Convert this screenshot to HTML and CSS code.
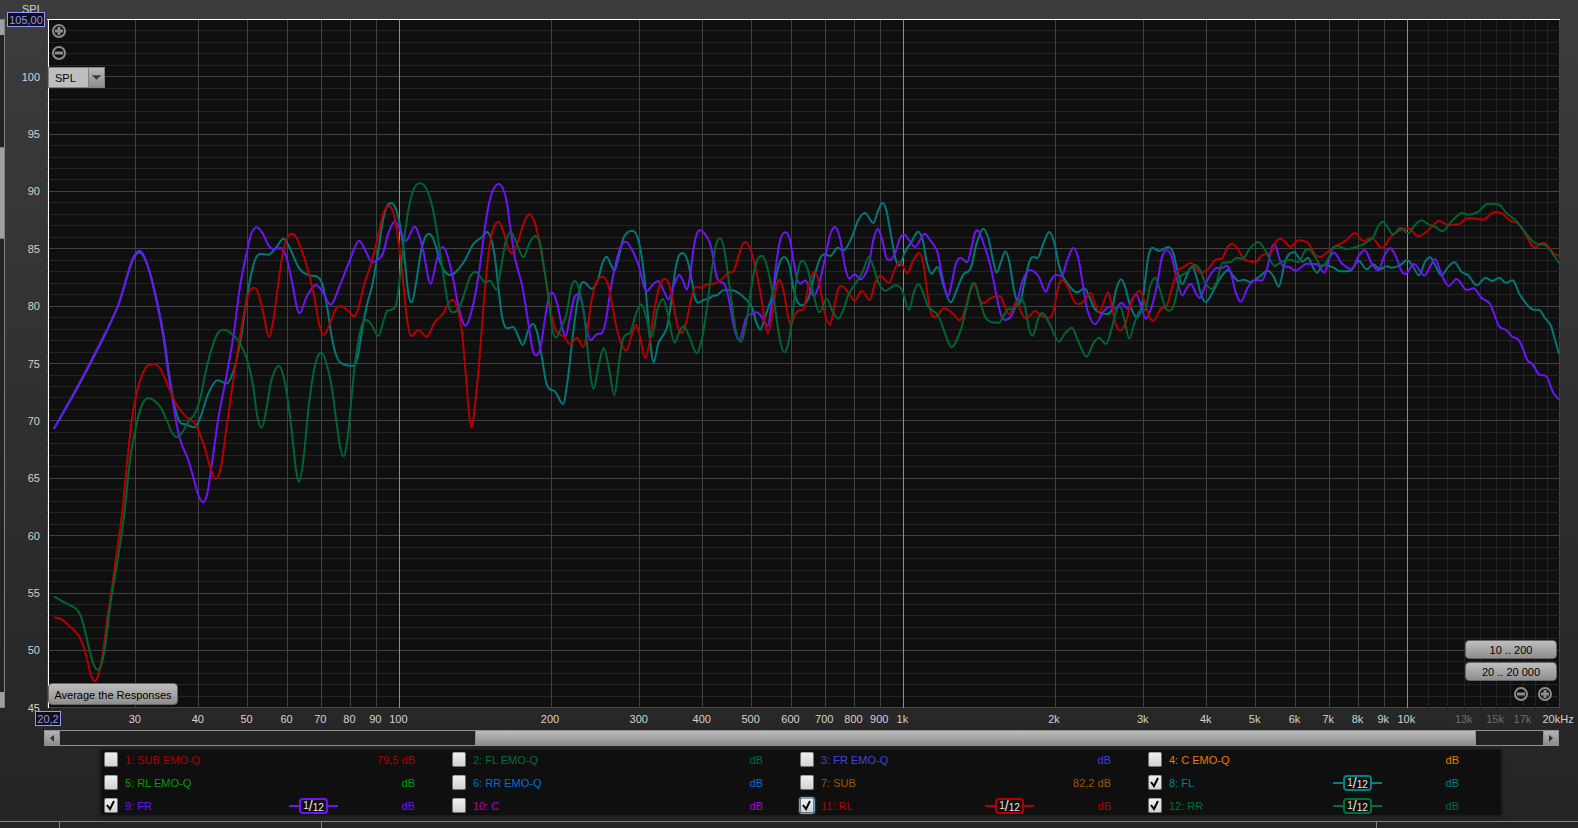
FILE: index.html
```html
<!DOCTYPE html>
<html lang="en">
<head>
<meta charset="utf-8">
<title>SPL overlays</title>
<link rel="stylesheet" href="styles.css">
</head>
<body>
<main class="app">
  <section class="chart">
    <div class="vscroll">
      <button class="step" type="button" aria-label="Scroll up"></button>
      <div class="vtrack"><div class="vthumb"></div></div>
      <button class="step" type="button" aria-label="Scroll down"></button>
    </div>
    <div class="y-axis" id="y-axis">
      <span class="unit">SPL</span>
      <input class="limit limit-top" type="text" value="105,00" aria-label="Top of range">
    </div>
    <div class="plot">
      <svg class="graph" id="graph" viewBox="141 57 4539 2067" preserveAspectRatio="none" role="img" aria-label="Frequency response"></svg>
      <div class="tools tools-top">
        <button class="zoom" type="button" aria-label="Zoom in vertically"><svg viewBox="0 0 16 16"><circle cx="8" cy="8" r="6"/><path d="M4 8h8M8 4v8"/></svg></button>
        <button class="zoom" type="button" aria-label="Zoom out vertically"><svg viewBox="0 0 16 16"><circle cx="8" cy="8" r="6"/><path d="M4 8h8"/></svg></button>
        <div class="picker">
          <select aria-label="Vertical axis"><option>SPL</option></select>
          <svg class="arrow" viewBox="0 0 16 19"><path d="M3 7h10l-5 5z"/></svg>
        </div>
      </div>
      <button class="push average" type="button">Average the Responses</button>
      <div class="tools tools-bottom">
        <button class="push" type="button">10 .. 200</button>
        <button class="push" type="button">20 .. 20 000</button>
        <div class="zoom-pair">
          <button class="zoom" type="button" aria-label="Zoom out horizontally"><svg viewBox="0 0 16 16"><circle cx="8" cy="8" r="6"/><path d="M4 8h8"/></svg></button>
          <button class="zoom" type="button" aria-label="Zoom in horizontally"><svg viewBox="0 0 16 16"><circle cx="8" cy="8" r="6"/><path d="M4 8h8M8 4v8"/></svg></button>
        </div>
      </div>
    </div>
    <div class="x-axis" id="x-axis">
      <input class="limit limit-left" type="text" value="20,2" aria-label="Start of range">
    </div>
    <div class="hscroll">
      <button class="hstep" type="button" aria-label="Scroll left"><svg viewBox="0 0 14 14"><path d="M9 4v7L5 7z"/></svg></button>
      <div class="htrack"><div class="hthumb"></div></div>
      <button class="hstep" type="button" aria-label="Scroll right"><svg viewBox="0 0 14 14"><path d="M5 4v7l4-4z"/></svg></button>
    </div>
  </section>
  <section class="legend" id="legend" aria-label="Measurements"></section>
  <footer class="status"><span></span><span></span><span></span><span></span></footer>
</main>
<script src="chart.js"></script>
</body>
</html>
```
FILE: styles.css
```css
* { box-sizing: border-box; }

body {
  margin: 0;
  font-family: "Liberation Sans", Arial, sans-serif;
  font-size: 11px;
  line-height: 14px;
  color: #d2d2d2;
}

button, input, select { font: inherit; margin: 0; padding: 0; }

.app {
  display: flex;
  flex-direction: column;
  min-height: 100vh;
  background: linear-gradient(#3c3c3c, #242424);
  overflow: hidden;
}

.chart {
  flex: 1;
  display: grid;
  grid-template-columns: 5px 42px 1fr 18px;
  grid-template-rows: 19px 1fr 22px 16px;
}

/* Vertical scroll bar, cut off by the window edge */
.vscroll {
  grid-area: 2 / 1;
  display: flex;
  flex-direction: column;
  border: solid #828282;
  border-width: 1px 1px 1px 0;
  background: #232323;
}
.vtrack { flex: 1; display: flex; flex-direction: column; }
.vtrack::before { content: ""; flex: 0 0 17%; }
.vthumb { flex: 0 0 14%; background: #a0a0a0; border: solid #777; border-width: 1px 0; }
.step { height: 15px; border: 0; background: #a0a0a0; }

.y-axis { grid-area: 2 / 2; position: relative; }
.tick { position: absolute; white-space: nowrap; }
.y-axis .tick { right: 7px; transform: translateY(-50%); }
.x-axis .tick { top: 4px; margin-left: -1px; transform: translateX(-50%); }
.x-axis .faint { color: #6e6e6e; }
.unit { position: absolute; left: 17px; top: -17px; }

.limit {
  position: absolute;
  height: 15px;
  border: 1px solid #9696ff;
  background: #0f0f14;
  color: #9696f0;
  text-align: center;
}
.limit-top { left: 2px; top: -7px; width: 38px; }
.limit-left { left: -12px; top: 3px; width: 26px; }

.plot {
  grid-area: 2 / 3;
  position: relative;
  min-height: 300px;
  background: #0f0f0f;
  border: solid #444;
  border-width: 0 1px 1px;
}
.graph { position: absolute; inset: 0 -1px -1px; width: calc(100% + 2px); height: calc(100% + 1px); }
.graph path { fill: none; vector-effect: non-scaling-stroke; }
.grid-minor { stroke: #232323; stroke-width: 1; shape-rendering: crispEdges; }
.grid-major { stroke: #414141; stroke-width: 1; shape-rendering: crispEdges; }
.grid-decade { stroke: #8c8c8c; stroke-width: 1; shape-rendering: crispEdges; }
.grid-edge { stroke: #fff; stroke-width: 1; shape-rendering: crispEdges; }
.trace { stroke-width: 2; stroke-linejoin: round; }

.tools { position: absolute; display: flex; flex-direction: column; }
.tools-top { left: 0; top: 4px; gap: 6px; }
.tools-top .zoom { margin-left: 3px; }
.tools-bottom { right: 2px; bottom: 5px; width: 92px; gap: 3px; }
.zoom-pair { display: flex; justify-content: flex-end; gap: 8px; padding: 2px 4px 0 0; }
.zoom { width: 16px; height: 16px; border: 0; background: none; }
.zoom svg { display: block; width: 16px; height: 16px; fill: none; stroke: #8c8c8c; stroke-width: 2; }
.zoom svg path { stroke-width: 3; }

.picker { position: relative; width: 57px; height: 21px; }
.picker select {
  appearance: none;
  width: 100%;
  height: 100%;
  padding: 0 18px 0 6px;
  border: 1px solid #828282;
  border-radius: 0;
  background: #bebebe;
  color: #000;
}
.arrow {
  position: absolute;
  right: 1px;
  top: 1px;
  width: 16px;
  height: 19px;
  background: linear-gradient(#bababa, #8c8c8c);
  border-left: 1px solid #828282;
  fill: #3c3c3c;
  pointer-events: none;
}

.push {
  height: 19px;
  border: 1px solid #646464;
  border-radius: 4px;
  background: linear-gradient(#bebebe, #8e8e8e);
  color: #000;
}
.average { position: absolute; left: 0; bottom: 2px; height: 22px; padding: 1px 5px 0; min-width: 130px; }

.x-axis { grid-area: 3 / 3; position: relative; }

.hscroll {
  grid-area: 4 / 3;
  display: flex;
  margin: 0 1px 0 -3px;
  border: 1px solid #909090;
  background: #232323;
}
.hstep { width: 15px; border: 0 solid #909090; background: linear-gradient(#b4b4b4, #8c8c8c); display: grid; place-items: center; }
.hstep:first-child { border-right-width: 1px; }
.hstep:last-child { border-left-width: 1px; }
.hstep svg { width: 14px; height: 14px; fill: #323232; }
.htrack { flex: 1; display: flex; }
.htrack::before { content: ""; flex: 0 0 28%; }
.hthumb { flex: 0 0 67.5%; background: linear-gradient(#bcbcbc, #8c8c8c); border: solid #909090; border-width: 0 1px; }

.legend {
  display: grid;
  grid-template-columns: repeat(4, 1fr);
  margin: 4px 77px 6px 101px;
  padding: 0 5px 0 3px;
  background: #0f0f0f;
  box-shadow: 0 0 4px #111;
}
.entry { display: flex; align-items: center; height: 23px; padding: 0 37px 4px 0; }
.legend .entry:nth-last-child(-n+4) { height: 19px; padding-bottom: 0; }
.entry label { flex: 1; padding: 1px 0 0 7px; }
.entry input {
  display: block;
  appearance: none;
  width: 14px;
  height: 15px;
  border: 1px solid #6e7378;
  border-top-color: #a0a0a0;
  border-radius: 2px;
  background: linear-gradient(#f0f0f0, #d2d2d2);
}
.entry input.focused { outline: 1px solid #6ea0d2; box-shadow: 0 0 2px 1px #4678aa; }
.check { position: relative; width: 14px; height: 15px; }
.check svg { position: absolute; inset: 0; width: 14px; height: 15px; fill: none; stroke: #000; stroke-width: 2; pointer-events: none; }
.level { min-width: 77px; padding-top: 1px; text-align: right; }
.smoothing { display: flex; align-items: center; }
.smoothing::before, .smoothing::after { content: ""; width: 10px; height: 2px; background: currentColor; }
.badge {
  display: flex;
  justify-content: center;
  width: 29px;
  height: 16px;
  border: 2px solid currentColor;
  border-radius: 4px;
}
.badge span { color: #e6e6e6; font-size: 10px; line-height: 11px; }
.badge .slash { font-size: 14px; line-height: 12px; }
.badge .den { line-height: 15px; }

.status {
  display: grid;
  grid-template-columns: 59px 262px 1fr 202px;
  height: 7px;
  border-top: 1px solid #828282;
}
.status span + span { border-left: 1px solid #828282; }
```
FILE: chart.js
```js
// Traces are x,y pairs on the graph's own drawing grid.
const traces = [
  { color: '#007878', points: '162,1286 237,1155 302,1030 355,915 385,818 402,772 419,757 434,775 452,826 474,918 492,1012 504,1100 518,1190 528,1235 540,1267 560,1274 582,1282 600,1255 625,1180 653,1141 680,1150 700,1115 720,1030 735,930 750,840 765,780 780,762 805,764 830,740 850,716 865,735 898,806 925,825 950,829 967,852 982,925 997,1020 1012,1075 1028,1092 1060,1098 1073,1070 1088,980 1102,910 1117,855 1132,770 1150,655 1162,617 1174,609 1188,628 1200,675 1212,760 1225,880 1235,907 1248,850 1262,760 1275,713 1287,701 1302,722 1320,785 1335,815 1351,825 1390,788 1420,732 1445,712 1461,696 1473,715 1485,775 1497,880 1507,955 1521,985 1540,981 1555,1010 1568,1035 1585,990 1599,971 1612,1000 1627,1080 1638,1145 1648,1167 1665,1174 1689,1212 1703,1140 1717,1020 1730,920 1742,855 1751,846 1775,866 1792,845 1807,790 1820,770 1833,795 1843,812 1855,775 1870,715 1883,697 1897,692 1912,710 1925,770 1937,870 1950,1020 1961,1087 1975,1030 2000,985 2013,910 2025,815 2035,772 2047,759 2062,780 2075,840 2085,895 2095,908 2110,900 2125,897 2138,888 2152,885 2170,871 2195,871 2225,886 2255,920 2270,970 2281,989 2295,950 2317,885 2335,800 2352,771 2368,795 2380,865 2392,905 2406,916 2425,895 2445,820 2460,775 2473,763 2491,768 2513,743 2530,751 2552,720 2575,660 2595,639 2620,669 2635,630 2648,609 2660,635 2672,700 2685,770 2697,797 2715,755 2735,725 2754,695 2768,720 2780,785 2794,822 2813,800 2830,855 2852,907 2872,865 2890,823 2912,805 2930,730 2950,686 2965,715 2980,785 2990,818 3003,785 3016,755 3028,785 3042,870 3057,915 3073,850 3088,785 3100,771 3112,774 3130,730 3148,696 3162,725 3178,800 3195,840 3232,877 3254,865 3267,888 3283,925 3300,938 3320,942 3335,930 3348,870 3363,838 3375,860 3390,915 3410,952 3425,920 3435,845 3445,770 3457,743 3477,753 3505,741 3520,760 3533,815 3547,853 3561,825 3576,800 3588,825 3602,880 3617,906 3635,882 3660,835 3685,810 3700,828 3715,843 3732,839 3750,846 3775,832 3804,812 3820,828 3836,860 3855,785 3868,762 3882,757 3908,785 3924,773 3938,800 3951,818 3970,795 4000,802 4020,814 4050,813 4076,782 4100,808 4120,793 4140,808 4160,799 4175,803 4200,796 4221,780 4238,798 4257,826 4275,785 4290,772 4305,795 4325,826 4345,800 4363,787 4385,816 4405,826 4430,856 4457,833 4477,843 4498,833 4518,849 4538,841 4560,885 4600,929 4618,930 4635,954 4653,978 4665,1020 4677,1062' },
  { color: '#6e14fa', points: '162,1286 235,1155 300,1030 355,915 385,815 402,768 418,752 432,768 450,820 472,915 490,1010 502,1100 518,1200 530,1275 544,1330 565,1380 582,1440 595,1485 609,1507 622,1480 635,1395 655,1255 678,1135 700,1010 720,860 742,750 754,700 770,682 788,700 805,735 820,747 842,744 858,768 875,840 890,920 899,939 920,890 948,855 968,876 992,914 1020,855 1050,780 1077,722 1098,755 1115,786 1132,780 1148,762 1165,700 1185,664 1200,690 1218,722 1244,680 1268,745 1292,852 1310,780 1327,741 1342,765 1360,840 1378,930 1396,977 1418,920 1438,810 1458,660 1475,580 1497,551 1518,595 1532,690 1545,775 1567,860 1585,970 1598,1050 1609,1066 1622,1040 1635,955 1648,885 1656,878 1670,905 1686,980 1697,1009 1710,950 1722,895 1732,883 1745,905 1758,975 1771,1021 1790,1003 1805,1000 1817,965 1830,880 1845,800 1862,740 1877,725 1898,753 1917,800 1932,860 1942,873 1955,857 1975,843 1990,870 2006,898 2020,860 2038,825 2050,845 2060,869 2070,830 2080,750 2090,702 2101,691 2120,710 2133,740 2150,830 2160,845 2172,850 2185,890 2203,985 2217,1021 2240,950 2255,942 2270,937 2288,955 2303,978 2315,910 2330,780 2342,715 2357,697 2370,720 2380,780 2392,840 2401,851 2416,841 2430,870 2441,888 2455,860 2475,775 2490,705 2505,681 2520,715 2535,800 2548,836 2564,822 2580,838 2605,800 2620,720 2633,686 2648,725 2660,775 2670,780 2685,760 2700,715 2713,704 2728,722 2745,741 2760,720 2774,701 2790,720 2812,755 2827,830 2844,889 2855,850 2868,790 2882,773 2901,787 2915,740 2925,698 2933,691 2947,720 2972,800 2990,890 3003,945 3015,960 3032,950 3050,910 3067,845 3089,810 3115,828 3138,876 3150,845 3168,824 3185,828 3202,780 3220,744 3235,775 3248,850 3262,930 3285,973 3310,935 3328,920 3345,926 3364,908 3383,926 3398,895 3409,884 3422,915 3438,956 3455,920 3470,860 3485,775 3500,751 3515,770 3530,835 3547,886 3560,865 3572,851 3587,878 3599,894 3620,845 3650,804 3665,804 3680,797 3693,820 3708,880 3723,905 3742,865 3765,840 3785,842 3800,810 3815,745 3824,732 3838,775 3850,800 3865,800 3887,812 3910,796 3920,791 3950,792 3973,818 3988,775 4002,758 4025,790 4056,808 4075,770 4094,750 4115,790 4135,812 4152,770 4170,744 4188,770 4203,810 4216,822 4242,792 4273,827 4290,800 4305,777 4325,825 4346,858 4370,837 4400,870 4421,865 4445,894 4470,912 4497,978 4518,990 4537,1010 4558,1022 4582,1080 4597,1092 4618,1124 4638,1128 4660,1178 4678,1199' },
  { color: '#b40000', points: '162,1852 182,1857 205,1875 235,1906 250,1938 263,1985 273,2025 284,2044 295,2025 308,1965 320,1870 335,1770 347,1680 365,1550 382,1380 398,1240 412,1170 428,1120 445,1095 460,1091 480,1105 505,1160 530,1215 555,1247 585,1272 610,1330 630,1400 647,1437 662,1405 678,1295 700,1140 720,1010 738,910 750,872 762,863 775,880 790,940 807,1011 820,960 835,850 850,750 862,713 874,701 890,715 915,780 940,875 958,975 972,1005 992,965 1007,928 1023,918 1045,933 1061,949 1075,925 1092,855 1115,785 1135,705 1150,640 1167,617 1182,645 1195,720 1207,820 1220,950 1233,1008 1255,990 1280,1010 1305,965 1330,940 1345,910 1358,899 1372,925 1385,990 1398,1130 1408,1250 1415,1283 1425,1215 1438,1080 1452,900 1467,750 1480,685 1496,665 1512,700 1525,745 1535,759 1552,730 1573,665 1589,643 1605,670 1620,735 1635,820 1650,920 1665,985 1678,1003 1692,1010 1711,1033 1730,1013 1750,1041 1762,990 1775,900 1790,845 1807,830 1823,850 1835,905 1850,985 1865,1035 1879,1051 1895,1005 1908,974 1920,1010 1935,1074 1948,1030 1963,930 1978,860 1994,836 2008,855 2020,910 2033,980 2046,999 2060,960 2075,890 2088,860 2105,863 2120,853 2138,852 2163,840 2185,818 2200,814 2215,770 2227,733 2237,726 2252,750 2268,810 2285,900 2295,970 2304,1000 2317,940 2330,855 2340,840 2352,880 2365,955 2374,974 2384,945 2394,933 2410,928 2425,860 2442,815 2457,845 2473,935 2490,973 2503,920 2515,865 2525,858 2545,878 2564,903 2585,872 2609,900 2625,850 2640,827 2667,848 2685,805 2699,785 2722,819 2740,780 2758,759 2770,790 2782,880 2793,940 2805,952 2832,925 2860,942 2879,961 2895,930 2910,875 2925,853 2940,900 2951,910 2970,895 3000,888 3013,915 3027,943 3050,905 3065,940 3079,956 3105,933 3125,948 3146,954 3160,935 3175,860 3187,840 3205,865 3223,905 3235,912 3250,905 3272,879 3286,915 3298,936 3310,910 3324,877 3338,930 3348,975 3360,991 3376,970 3395,905 3419,872 3438,920 3450,955 3460,962 3482,927 3500,917 3517,860 3533,813 3550,802 3572,789 3603,818 3625,807 3648,778 3665,776 3683,740 3697,731 3715,750 3735,780 3767,785 3787,765 3810,760 3830,722 3842,717 3872,740 3895,721 3905,722 3922,727 3945,763 3960,771 3990,750 4008,737 4038,722 4064,699 4090,723 4115,713 4146,744 4170,713 4200,690 4225,685 4255,709 4285,690 4317,663 4345,675 4375,673 4403,654 4450,659 4475,640 4490,636 4507,641 4530,662 4555,671 4575,700 4593,733 4605,742 4630,728 4660,758 4678,769' },
  { color: '#006432', points: '162,1789 185,1803 215,1818 232,1830 245,1855 258,1905 272,1965 283,1998 294,2009 306,1988 318,1920 332,1805 353,1680 372,1550 390,1380 408,1280 422,1225 433,1202 445,1194 460,1200 482,1222 502,1265 517,1300 531,1311 545,1300 565,1265 585,1240 602,1190 618,1110 640,1030 655,997 670,989 690,997 717,1025 740,1075 758,1150 772,1250 785,1284 797,1240 812,1150 825,1110 836,1098 848,1120 862,1190 875,1290 888,1410 897,1445 910,1380 927,1210 942,1110 953,1070 964,1058 978,1085 995,1160 1010,1270 1020,1340 1031,1369 1042,1320 1053,1210 1065,1090 1078,1005 1088,970 1100,960 1115,975 1135,1008 1150,965 1162,932 1175,929 1188,915 1200,830 1212,720 1227,620 1242,565 1261,550 1280,568 1298,625 1313,710 1328,810 1342,900 1350,930 1359,937 1378,922 1395,875 1410,830 1427,815 1455,846 1470,842 1490,870 1502,810 1517,725 1532,697 1550,730 1570,772 1588,730 1605,708 1620,730 1633,810 1645,890 1656,980 1668,1013 1685,980 1700,940 1713,865 1725,843 1738,870 1753,950 1767,1090 1781,1167 1795,1100 1811,1044 1826,1100 1843,1186 1858,1080 1868,1020 1877,1004 1890,1000 1905,950 1923,913 1938,950 1955,1011 1972,930 1989,897 2003,940 2024,1028 2038,995 2051,978 2068,1010 2090,1060 2107,1010 2120,930 2135,810 2148,735 2160,715 2173,750 2190,870 2207,990 2222,1026 2240,960 2255,855 2270,785 2285,767 2300,795 2320,890 2338,1010 2353,1057 2367,1020 2378,940 2388,850 2398,795 2407,782 2422,805 2440,880 2458,937 2480,896 2498,935 2515,956 2530,930 2545,885 2575,838 2590,810 2606,771 2620,800 2636,850 2657,872 2686,856 2706,870 2727,930 2742,875 2756,852 2770,880 2785,920 2815,948 2835,1000 2854,1041 2882,990 2902,910 2915,855 2923,848 2935,885 2955,950 2975,966 2997,968 3015,940 3027,926 3042,928 3063,895 3075,920 3088,990 3098,1007 3115,955 3127,939 3148,970 3177,1025 3195,1000 3216,983 3235,1025 3260,1070 3280,1030 3297,1013 3318,1032 3335,985 3348,935 3360,919 3372,955 3388,1016 3403,970 3420,932 3435,930 3450,860 3465,833 3480,870 3495,920 3507,932 3522,915 3540,835 3560,818 3585,795 3600,810 3617,850 3635,867 3650,845 3668,788 3690,787 3710,773 3728,776 3750,745 3775,726 3795,750 3825,798 3845,784 3870,779 3895,786 3917,750 3927,747 3945,770 3966,800 3985,775 3998,745 4012,737 4038,747 4065,742 4095,730 4120,710 4135,678 4149,665 4162,680 4179,703 4201,683 4225,700 4245,675 4264,661 4285,673 4305,680 4327,694 4355,664 4387,639 4405,644 4435,635 4463,611 4497,614 4520,640 4550,664 4580,703 4603,729 4635,735 4678,790' }
];

const box = { left: 141, top: 57, width: 4539, height: 2067 };
const xOf = f => 1198 + 1512 * (Math.log10(f) - 2);
const yOf = db => 58 + (105 - db) * 34.42;
// Centre of the screen pixel that holds a drawing coordinate.
const snap = v => Math.floor(v / 3) * 3 + 1.5;

// Monotone cubic through the points, so peaks and dips stay where they are.
function smooth(text) {
  const p = text.split(' ').map(s => s.split(',').map(Number));
  const n = p.length;
  const d = [];
  for (let i = 0; i < n - 1; i++) d.push((p[i + 1][1] - p[i][1]) / (p[i + 1][0] - p[i][0]));
  const m = [d[0]];
  for (let i = 1; i < n - 1; i++) {
    const mean = (p[i + 1][1] - p[i - 1][1]) / (p[i + 1][0] - p[i - 1][0]);
    const limit = 3 * Math.min(Math.abs(d[i - 1]), Math.abs(d[i]));
    m.push(d[i - 1] * d[i] <= 0 ? 0 : Math.sign(mean) * Math.min(Math.abs(mean), limit));
  }
  m.push(d[n - 2]);
  let path = `M${p[0]}`;
  for (let i = 0; i < n - 1; i++) {
    const h = (p[i + 1][0] - p[i][0]) / 3;
    path += `C${p[i][0] + h},${p[i][1] + m[i] * h} ${p[i + 1][0] - h},${p[i + 1][1] - m[i + 1] * h} ${p[i + 1]}`;
  }
  return path;
}

const right = box.left + box.width;
const bottom = box.top + box.height;
const across = y => `M${box.left} ${snap(y)}H${right}`;
const down = x => `M${snap(x)} ${box.top}V${bottom}`;

let minor = '';
let major = '';
for (let db = 104; db > 45; db--) {
  if (db % 5) minor += across(yOf(db)); else major += across(yOf(db));
}
for (let k = 11; k < 20; k++) minor += down(xOf(k * 1000));
for (const base of [10, 100, 1000]) {
  for (let k = 2; k < 10; k++) if (base * k > 20) major += down(xOf(base * k));
}
const decades = [100, 1000, 10000].map(f => down(xOf(f))).join('');

document.getElementById('graph').innerHTML =
  `<path class="grid-minor" d="${minor}"/><path class="grid-major" d="${major}"/>` +
  `<path class="grid-decade" d="${decades}"/>` +
  `<path class="grid-edge" d="M${box.left} 58.5H${right}M145.5 58.5V${bottom}"/>` +
  traces.map(t => `<path class="trace" stroke="${t.color}" d="${smooth(t.points)}"/>`).join('');

const yAxis = document.getElementById('y-axis');
let yTicks = '';
for (let db = 100; db >= 45; db -= 5) {
  yTicks += `<span class="tick" style="top:${(yOf(db) - box.top) / box.height * 100}%">${db}</span>`;
}
yAxis.insertAdjacentHTML('afterbegin', yTicks);

const xTicks = [30, 40, 50, 60, 70, 80, 90, 100, 200, 300, 400, 500, 600, 700, 800, 900,
  1000, 2000, 3000, 4000, 5000, 6000, 7000, 8000, 9000, 10000, 13000, 15000, 17000, 20000];
document.getElementById('x-axis').insertAdjacentHTML('afterbegin', xTicks.map(f => {
  const name = f === 20000 ? '20kHz' : f >= 1000 ? f / 1000 + 'k' : f;
  const faint = f > 10000 && f < 20000 ? ' faint' : '';
  return `<span class="tick${faint}" style="left:${(xOf(f) - box.left) / box.width * 100}%">${name}</span>`;
}).join(''));

const entries = [
  ['1: SUB EMO-Q', '#aa0000', '79,5 dB'], ['2: FL EMO-Q', '#006e37', 'dB'],
  ['3: FR EMO-Q', '#4141dc', 'dB'], ['4: C EMO-Q', '#f07800', 'dB'],
  ['5: RL EMO-Q', '#00a000', 'dB'], ['6: RR EMO-Q', '#006edc', 'dB'],
  ['7: SUB', '#a05500', '82,2 dB'], ['8: FL', '#008282', 'dB', true],
  ['9: FR', '#6e14fa', 'dB', true], ['10: C', '#b400c8', 'dB'],
  ['11: RL', '#b40000', 'dB', true, true], ['12: RR', '#006e37', 'dB', true]
];
document.getElementById('legend').innerHTML = entries.map(([name, color, level, on, focused], i) => `
  <div class="entry" style="color:${color}">
    <span class="check"><input type="checkbox" id="m${i}"${on ? ' checked' : ''}${focused ? ' class="focused"' : ''}>${on ? '<svg viewBox="0 0 14 15"><path d="M3 7l3 4 4-8"/></svg>' : ''}</span>
    <label for="m${i}">${name}</label>
    ${on ? '<span class="smoothing"><span class="badge"><span>1</span><span class="slash">/</span><span class="den">12</span></span></span>' : ''}
    <span class="level">${level}</span>
  </div>`).join('');
```
